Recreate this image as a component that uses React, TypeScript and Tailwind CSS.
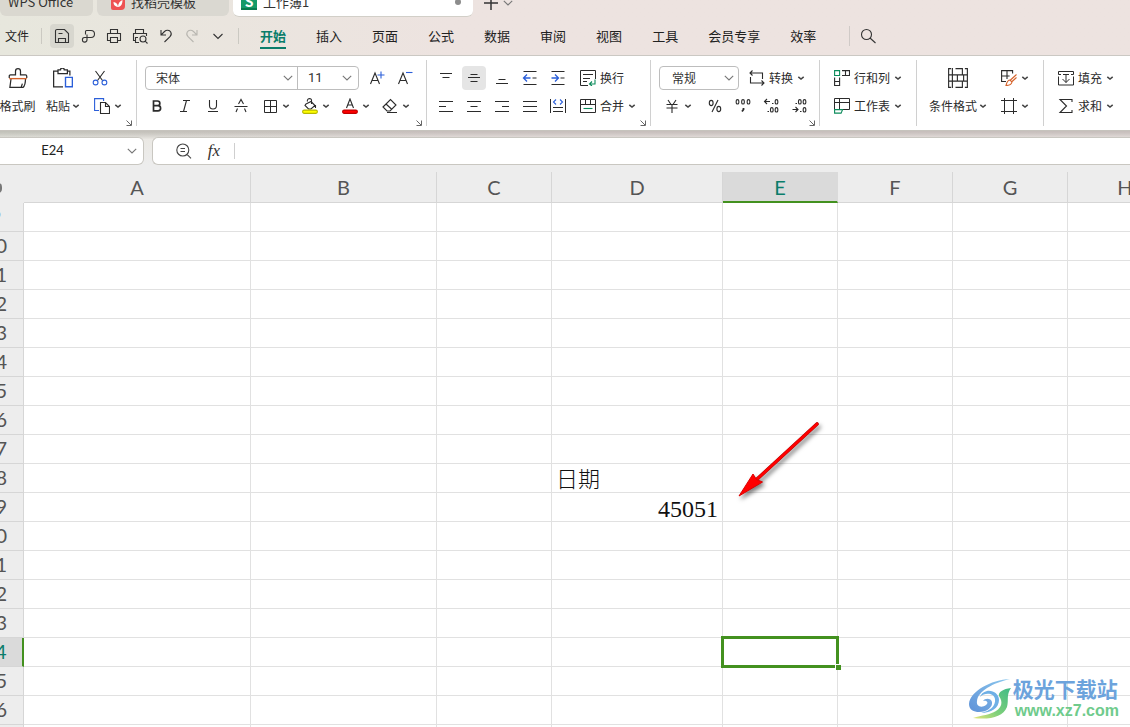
import { useState } from 'react';
import type { ReactNode } from 'react';

type IconProps = { children: ReactNode; className?: string };

function Icon({ children, className = 'size-4' }: IconProps) {
  return (
    <svg
      viewBox="0 0 16 16"
      fill="none"
      stroke="currentColor"
      strokeWidth="1.1"
      className={`${className} shrink-0`}
      aria-hidden="true"
    >
      {children}
    </svg>
  );
}

function Caret() {
  return (
    <svg viewBox="0 0 8 8" className="size-2 shrink-0" fill="none" stroke="#444" strokeWidth="1.5" aria-hidden="true">
      <path d="M1.3 2.8 4 5l2.7-2.2" />
    </svg>
  );
}

function WideCaret({ className = '' }: { className?: string }) {
  return (
    <svg viewBox="0 0 10 6" className={`h-1.5 w-2.5 shrink-0 ${className}`} fill="none" stroke="#777" strokeWidth="1.1" aria-hidden="true">
      <path d="M.8.8 5 5 9.2.8" />
    </svg>
  );
}

function Launcher() {
  return (
    <button aria-label="更多设置" className="absolute right-1 bottom-0 size-1.5 text-[#666]">
      <svg viewBox="0 0 6 6" className="size-1.5" fill="none" stroke="currentColor" aria-hidden="true">
        <path d="M.5.5 5 5M5.5.5v5h-5" />
      </svg>
    </button>
  );
}

type GroupProps = { children: ReactNode; className: string; launcher?: boolean };

function Group({ children, className, launcher }: GroupProps) {
  return (
    <section className={`relative my-1 flex h-[66px] shrink-0 border-r border-[#d0d0d0] pt-1.5 ${className}`}>
      {children}
      {launcher && <Launcher />}
    </section>
  );
}

type ToolProps = { label: string; children: ReactNode; active?: boolean };

function Tool({ label, children, active }: ToolProps) {
  return (
    <button
      aria-label={label}
      className={`flex size-6 shrink-0 items-center justify-center rounded ${active ? 'bg-[#e5e5e5]' : ''}`}
    >
      {children}
    </button>
  );
}

function DropTool({ label, children }: { label: string; children: ReactNode }) {
  return (
    <button aria-label={label} className="flex h-6 w-9 shrink-0 items-center gap-1 pl-[5px]">
      {children}
      <Caret />
    </button>
  );
}

function TextTool({ text, children, caret }: { text: string; children: ReactNode; caret?: boolean }) {
  return (
    <button className="flex h-6 shrink-0 items-center gap-1 whitespace-nowrap">
      {children}
      <span>{text}</span>
      {caret && <Caret />}
    </button>
  );
}

function Lines({ d }: { d: string }) {
  return (
    <Icon>
      <path d={d} strokeWidth="1" />
    </Icon>
  );
}

// A small zero for the number format icons
function Zero({ x, y }: { x: number; y: number }) {
  return <rect x={x} y={y} width="2.6" height="4.4" rx="1.3" strokeWidth="1.1" />;
}

const QUICK_ACTIONS: { label: string; icon: ReactNode; active?: boolean; faded?: boolean }[] = [
  {
    label: '保存',
    active: true,
    icon: <path d="M3 1.5h7.500l4 4v9h-13V3A1.5 1.5 0 0 1 3 1.5ZM4.5 14.500v-4h7v4M4.5 5.5h4" />,
  },
  {
    label: '输出为PDF',
    icon: <path d="M5.500 6.500v-3a1 1 0 0 1 1-1H11a3.500 3.500 0 0 1 0 7H4.500A2.300 2.300 0 1 0 7 11.800V6.500" />,
  },
  { label: '打印', icon: <path d="M4.500 5.500v-4h7v4M4.500 12.500h-3v-7h13v7h-3M4.500 9.500h7v5h-7z" /> },
  {
    label: '打印预览',
    icon: <path d="M3.500 5.500v-4h8v4M3.500 12.500h-2v-7h13V8M6 9.500H3.500v5h3.500M13.200 13.200l2.300 2.300M14 11a3 3 0 1 1-6 0 3 3 0 0 1 6 0Z" />,
  },
  { label: '撤销', icon: <path d="M3 2v5h5M3.200 6.800 6.500 3.500c2-1.800 5-1.500 6.200.5 1 1.700.6 3.300-.7 4.600L6.500 14" /> },
  {
    label: '恢复',
    faded: true,
    icon: <path d="M13 2v5H8M12.800 6.800 9.500 3.500C7.500 1.700 4.500 2 3.300 4c-1 1.700-.6 3.300.7 4.600L9.500 14" />,
  },
  { label: '自定义快速访问工具栏', icon: <path d="m3.500 6 4.500 4.500L12.500 6" /> },
];

const MENUS = ['开始', '插入', '页面', '公式', '数据', '审阅', '视图', '工具', '会员专享', '效率'];

const COLUMNS = ['A', 'B', 'C', 'D', 'E', 'F', 'G', 'H'];
const ROWS = Array.from({ length: 19 }, (_, i) => i + 9);
const CELLS: Record<string, string> = { D18: '日期', D19: '45051' };

function TitleTabs() {
  return (
    <header className="flex h-[17px] shrink-0 items-end gap-1 overflow-hidden text-[13px] text-[#333]">
      <div className="mb-px flex h-7 w-[93px] items-center rounded-b-md bg-[#dad8d0] pl-2">WPS Office</div>
      <div className="mb-px flex h-7 w-[132px] items-center gap-1.5 rounded-b-md bg-[#dad8d1] pl-3.5">
        <svg viewBox="0 0 14 16" className="h-4 w-3.5 shrink-0" aria-hidden="true">
          <path d="M0 2a2 2 0 0 1 2-2h12v12a4 4 0 0 1-4 4H2a2 2 0 0 1-2-2Z" fill="#ee5253" />
          <path d="M7 13.500V7M7 13C3.500 12.500 2.500 10.500 2.500 8 5 8.500 7 10 7 13Zm0 0c3.500-.5 4.500-3.500 4.500-7C9 7 7 9.500 7 13Z" fill="#fff" />
        </svg>
        <span>找稻壳模板</span>
      </div>
      <div className="flex h-[29px] w-60 items-center gap-1.5 rounded-b-md border-b border-[#d2cfc8] bg-white pr-3 pl-2">
        <span className="flex size-4 shrink-0 items-center justify-center border-b-2 border-[#087a4e] bg-[#149a68] text-[14px]/[14px] font-bold text-white">
          S
        </span>
        <span className="grow">工作簿1</span>
        <span className="size-1.5 rounded-full bg-[#8c8c8c]" />
      </div>
      <button aria-label="新建标签" className="ml-1.5 flex h-7 items-center">
        <Icon>
          <path d="M8 1v14M1 8h14" strokeWidth="1.5" />
        </Icon>
      </button>
      <button aria-label="标签列表" className="flex h-7 items-center">
        <WideCaret />
      </button>
    </header>
  );
}

function MenuBar() {
  const [current, setCurrent] = useState('开始');

  return (
    <nav className="flex h-[38px] shrink-0 items-center overflow-hidden text-[13px]/[20px] whitespace-nowrap text-[#222]">
      <button className="ml-[5px] text-[12px]">文件</button>
      <span className="mr-2 ml-3 h-4 w-px shrink-0 bg-[#cbc9c2]" />
      <div className="flex gap-0.5">
        {QUICK_ACTIONS.map((action) => (
          <button
            key={action.label}
            aria-label={action.label}
            className={`flex size-6 shrink-0 items-center justify-center rounded ${action.active ? 'bg-[#d8d7cf]' : ''} ${action.faded ? 'text-[#b8b6b0]' : 'text-[#333]'}`}
          >
            <Icon>{action.icon}</Icon>
          </button>
        ))}
      </div>
      <span className="mr-[21px] ml-2 h-4 w-px shrink-0 bg-[#cbc9c2]" />
      <div className="flex gap-[30px]">
        {MENUS.map((menu) => (
          <button
            key={menu}
            onClick={() => setCurrent(menu)}
            className={`border-y-2 border-t-transparent py-px ${menu === current ? 'border-b-[#0a7d6a] font-bold text-[#0a7d6a]' : 'border-b-transparent'}`}
          >
            {menu}
          </button>
        ))}
      </div>
      <span className="mr-2.5 ml-[33px] h-5 w-px shrink-0 bg-[#d0cac7]" />
      <button aria-label="搜索" className="text-[#333]">
        <Icon>
          <path d="M11.500 6.500a5 5 0 1 1-10 0 5 5 0 0 1 10 0ZM10 10l5.500 5" />
        </Icon>
      </button>
    </nav>
  );
}

function Ribbon() {
  return (
    <div className="flex h-[76px] shrink-0 overflow-hidden border-y border-t-[#cbc8c3] border-b-[#c6c3bd] bg-white text-[12px]/[16px] text-[#2b2b2b]">
      <Group className="w-[137px] gap-2.5" launcher>
        <button className="flex w-[35px] flex-col items-center gap-1">
          <span className="flex h-6 items-center">
            <Icon className="size-5">
              <path d="M1 8V6.500a1 1 0 0 1 1-1h4V2.500a2 2 0 0 1 4 0v3h4a1 1 0 0 1 1 1V8M2.500 8l-1 7.500h10.500c1.500-1 2-4 2-7.500M10.500 15.500l1-3" strokeWidth="1" />
              <path d="M1 8.500h14" stroke="#d5622a" />
            </Icon>
          </span>
          <span className="flex h-6 items-center whitespace-nowrap">格式刷</span>
        </button>
        <button className="flex w-9 flex-col items-center gap-1">
          <span className="flex h-6 items-center">
            <Icon className="size-5">
              <path d="M3.500 2.500H.500v12.500H8M11.500 2.500h2V6M4 1.500h2a1.500 1.500 0 0 1 3 0h2.500v3H4z" strokeWidth="1" />
              <path d="M10 7.500h5.500v7.500H10z" stroke="#2b5fd9" />
            </Icon>
          </span>
          <span className="flex h-6 items-center gap-0.5 whitespace-nowrap">
            粘贴
            <Caret />
          </span>
        </button>
        <div className="flex flex-col gap-1 pl-px">
          <button aria-label="剪切" className="flex h-6 items-center">
            <Icon>
              <path d="m3.500 1 7 9.500M12.500 1l-7 9.500" />
              <path d="M6 12.500a2.400 2.400 0 1 1-4.800 0 2.400 2.400 0 0 1 4.800 0ZM14.800 12.500a2.400 2.400 0 1 1-4.800 0 2.400 2.400 0 0 1 4.800 0Z" stroke="#2b5fd9" />
            </Icon>
          </button>
          <button aria-label="复制" className="flex h-6 items-center gap-1 pl-0.5">
            <Icon>
              <path d="M5 12.500H.600V.600h9V3" stroke="#2b5fd9" />
              <path d="M6.500 4.500h5l4 4v7h-9zM11.500 4.500v4h4" />
            </Icon>
            <Caret />
          </button>
        </div>
      </Group>

      <Group className="w-[290px] flex-col gap-1 pl-2" launcher>
        <div className="flex gap-1">
          <div className="mr-0.5 flex h-6 w-[214px] rounded border border-[#bdbdbd] text-[#333]">
            <div className="grid w-[152px] items-center border-r border-[#bdbdbd]">
              <select aria-label="字体" className="col-start-1 row-start-1 h-5 appearance-none pl-2.5 outline-none">
                <option>宋体</option>
              </select>
              <WideCaret className="pointer-events-none col-start-1 row-start-1 mr-1 justify-self-end" />
            </div>
            <div className="grid grow items-center">
              <select aria-label="字号" className="col-start-1 row-start-1 h-5 appearance-none pl-2.5 text-[13px] outline-none [font-family:Roboto,sans-serif]">
                <option>11</option>
              </select>
              <WideCaret className="pointer-events-none col-start-1 row-start-1 mr-1.5 justify-self-end" />
            </div>
          </div>
          <Tool label="增大字号">
            <Icon>
              <path d="M1.500 14 6 3l4.500 11M3 10.500h6" />
              <path d="M12 1.500v7M8.500 5h7" stroke="#2b5fd9" />
            </Icon>
          </Tool>
          <Tool label="减小字号">
            <Icon>
              <path d="M1.500 14 6 3l4.500 11M3 10.500h6" />
              <path d="M9 2.500h6.500" stroke="#2b5fd9" />
            </Icon>
          </Tool>
        </div>
        <div className="flex gap-1">
          <Tool label="加粗">
            <Icon>
              <path d="M4.500 3h4a2.300 2.300 0 0 1 0 4.700h-4zM4.500 7.700H9a2.600 2.600 0 0 1 0 5.200H4.500z" strokeWidth="1.700" />
            </Icon>
          </Tool>
          <Tool label="倾斜">
            <Icon>
              <path d="M6 2.500h7M3 13.500h7M9.500 2.500l-3 11" />
            </Icon>
          </Tool>
          <Tool label="下划线">
            <Icon>
              <path d="M4.500 2v5.500a3.500 3.500 0 0 0 7 0V2M3 13.500h10" />
            </Icon>
          </Tool>
          <Tool label="删除线">
            <Icon>
              <path d="M1.500 8.500h13M5.500 6 8 1.500 10.500 6M4.500 10.500 3 14M11.500 10.500 13 14" />
            </Icon>
          </Tool>
          <DropTool label="边框">
            <Lines d="M2.500 2.500h12v12h-12zM8.500 2.500v12M2.500 8.500h12" />
          </DropTool>
          <DropTool label="填充颜色">
            <Icon>
              <path d="M5.500 3.500a2 2 0 0 1 4-1.500v4M4 6l5-2.500 4 4-4 3.500H6.500L3 7.500zM13.500 7v3" />
              <rect x=".6" y="12.100" width="14.800" height="3.300" rx="1.600" fill="#ffff00" stroke="#b8b800" />
            </Icon>
          </DropTool>
          <DropTool label="字体颜色">
            <Icon>
              <path d="m4.500 10 3.500-9 3.500 9M5.500 7h5" />
              <rect x=".6" y="12.100" width="14.800" height="3.300" rx="1.600" fill="#ff0000" stroke="#c00000" />
            </Icon>
          </DropTool>
          <DropTool label="清除">
            <Icon>
              <path d="M1 9 8.500 1.500 14 7l-6 6H5zM4 6l6 5.500M5 14.500h10" />
            </Icon>
          </DropTool>
        </div>
      </Group>

      <Group className="w-56 flex-col gap-1 pl-[7px]" launcher>
        <div className="flex gap-1">
          <Tool label="顶端对齐">
            <Lines d="M2 3.500h12M4.500 7.500h7" />
          </Tool>
          <Tool label="垂直居中" active>
            <Lines d="M4.500 4.500h7M2 7.500h12M4.500 11.500h7" />
          </Tool>
          <Tool label="底端对齐">
            <Lines d="M4.500 9.500h7M2 13.500h12" />
          </Tool>
          <Tool label="减少缩进">
            <Icon>
              <path d="M1.500 1.500h13M1.500 14.500h13M10.500 8h4" />
              <path d="M8.500 8h-7M5 4.500 1.500 8 5 11.500" stroke="#2b5fd9" strokeWidth="1.300" />
            </Icon>
          </Tool>
          <Tool label="增加缩进">
            <Icon>
              <path d="M1.500 1.500h13M1.500 14.500h13M10.500 8h4" />
              <path d="M1.500 8h7M5 4.500 8.500 8 5 11.500" stroke="#2b5fd9" strokeWidth="1.300" />
            </Icon>
          </Tool>
          <div className="ml-1.5 flex">
            <TextTool text="换行">
              <Icon>
                <path d="M8 15.500H.500V.500h15V9M3 4.500h10M3 8.500h7M3 11.500h4" strokeWidth="1" />
                <path d="M15 9.500v4.500H9.500M12 11.500 9.500 14l2.500 2" stroke="#0a8a5a" />
              </Icon>
            </TextTool>
          </div>
        </div>
        <div className="flex gap-1">
          <Tool label="左对齐">
            <Lines d="M1 3.500h14M1 8.500h7M1 13.500h14" />
          </Tool>
          <Tool label="水平居中">
            <Lines d="M1 3.500h14M4.500 8.500h7M1 13.500h14" />
          </Tool>
          <Tool label="右对齐">
            <Lines d="M1 3.500h14M8 8.500h7M1 13.500h14" />
          </Tool>
          <Tool label="两端对齐">
            <Lines d="M1 3.500h14M1 8.500h14M1 13.500h14" />
          </Tool>
          <Tool label="分散对齐">
            <Icon>
              <path d="M.500 1v14M15.500 1v14M3 9.500h10M3 13.500h10" strokeWidth="1" />
              <path d="M6 1.500 3.500 4 6 6.500M10 1.500 12.500 4 10 6.500" stroke="#2b5fd9" />
            </Icon>
          </Tool>
          <div className="ml-1.5 flex">
            <TextTool text="合并" caret>
              <Icon>
                <path d="M.500 1.500h15v13H.500zM.500 6.500h15M5.500 1.500v5M10.500 1.500v5" strokeWidth="1" />
                <path d="M3.500 10.500h9" stroke="#0a8a5a" />
              </Icon>
            </TextTool>
          </div>
        </div>
      </Group>

      <Group className="w-[169px] flex-col gap-1 pl-2" launcher>
        <div className="flex gap-2.5">
          <div className="grid h-6 w-20 items-center rounded border border-[#bdbdbd] text-[#333]">
            <select aria-label="数字格式" className="col-start-1 row-start-1 h-5 appearance-none pl-3 outline-none">
              <option>常规</option>
            </select>
            <WideCaret className="pointer-events-none col-start-1 row-start-1 mr-1 justify-self-end" />
          </div>
          <TextTool text="转换" caret>
            <Icon>
              <path d="M3.500.500 1 3l2.500 2.500M1 3h12.500v6M1.500 7v6H15M12.500 10.500 15 13l-2.500 2.500" />
            </Icon>
          </TextTool>
        </div>
        <div className="flex gap-1">
          <DropTool label="货币格式">
            <Icon>
              <path d="m4 2 3 4.500M12 2 9 6.500M2.500 6.500h11M2.500 10h11M8 6.500V15" />
            </Icon>
          </DropTool>
          <div className="ml-1 flex gap-1">
            <Tool label="百分比样式">
              <Icon>
                <path d="M11 2 5 14" />
                <ellipse cx="4.200" cy="5" rx="1.900" ry="2.600" />
                <ellipse cx="11.800" cy="11" rx="1.900" ry="2.600" />
              </Icon>
            </Tool>
            <Tool label="千位分隔样式">
              <Icon>
                <Zero x={1.200} y={1.600} />
                <Zero x={6.700} y={1.600} />
                <Zero x={12.200} y={1.600} />
                <path d="M8.500 10v1.500L7 13.500" strokeWidth="1.800" />
              </Icon>
            </Tool>
            <Tool label="增加小数位数">
              <Icon>
                <path d="M4 1 1.500 3.500 4 6M1.500 3.500H7M9 5.500h1.500M4.500 13.500H6" />
                <Zero x={12.200} y={1.600} />
                <Zero x={7.500} y={9.600} />
                <Zero x={12.200} y={9.600} />
              </Icon>
            </Tool>
            <Tool label="减少小数位数">
              <Icon>
                <path d="M4.500 5.500H6M1.500 11.500H7M4.500 9 7 11.500 4.500 14M9 13.500h1.500" />
                <Zero x={7.500} y={1.600} />
                <Zero x={12.200} y={1.600} />
                <Zero x={12.200} y={9.600} />
              </Icon>
            </Tool>
          </div>
        </div>
      </Group>

      <Group className="w-[97px] flex-col gap-1 pl-3.5">
        <TextTool text="行和列" caret>
          <Icon>
            <path d="M.600 7.500v8h5v-8M.600 11.500h5M8 .600h7.500v4.900H8M11.500.600v4.900" />
            <path d="M.600.600h5v4.900h-5z" stroke="#0a8a5a" />
          </Icon>
        </TextTool>
        <TextTool text="工作表" caret>
          <Icon>
            <path d="M.500 11V.500h15v11H9M.500 4.500h15M5.500.500V11" strokeWidth="1" />
            <path d="M.600 11.600h8l-1.500 3.500H.600z" stroke="#0a8a5a" />
          </Icon>
        </TextTool>
      </Group>

      <Group className="w-[127px] gap-3.5 pl-3">
        <button className="flex flex-col items-center gap-1">
          <span className="flex h-6 items-center">
            <Icon className="size-5">
              <path d="M2.500.500H.500v15h2M13.500.500h2v15h-2M.500 5.500h3M.500 10.500h3M3.500 0v16M3.500 5.500h9v5h-9M6 .500h5.500v5M6 15.500h5.500v-5M12.500 5.500h3M12.500 10.500h3M7.500 5.500v5" strokeWidth=".9" />
            </Icon>
          </span>
          <span className="flex h-6 items-center gap-0.5 whitespace-nowrap">
            条件格式
            <Caret />
          </span>
        </button>
        <div className="flex flex-col gap-1">
          <button aria-label="单元格样式" className="flex h-6 items-center gap-1">
            <Icon>
              <path d="M5 11.500H.600V.600h11v3M.600 6h8M6 .600V9" />
              <path d="M15.500 4.500 9.500 10M15.500 7.500l-5 4.500M9 10c-2 0-3 1.500-4 5.500 3 0 5.500-.5 6-3.500z" stroke="#d5622a" />
            </Icon>
            <Caret />
          </button>
          <button aria-label="单元格" className="flex h-6 items-center gap-1">
            <Lines d="M3.500 0v16M12.500 0v16M0 2.500h16M0 13.500h16" />
            <Caret />
          </button>
        </div>
      </Group>

      <Group className="grow gap-3.5 border-r-0 pl-3.5">
        <div className="flex flex-col gap-1">
          <TextTool text="填充" caret>
            <Icon>
              <path d="M.500 4.500v-3h15v3M.500 4.500H3M13 4.500h2.500M.500 6.500v8.500h15V6.500M5 4.500h6M8 4.500v8M4.500 9 8 12.500 11.500 9" strokeWidth="1" />
            </Icon>
          </TextTool>
          <TextTool text="求和" caret>
            <Icon>
              <path d="M14 4V1.500H2L8.500 8 2 14.500h12V12" />
            </Icon>
          </TextTool>
        </div>
        <div className="flex flex-col gap-1">
          <Tool label="排序">
            <Icon className="size-5">
              <path d="M0 12.500 4 4l4 8.500M1.500 10h5" />
            </Icon>
          </Tool>
          <Tool label="筛选">
            <Icon className="size-5">
              <path d="M0 2.500h12L8 8v6l-3-2V8z" />
            </Icon>
          </Tool>
        </div>
      </Group>
    </div>
  );
}

function FormulaBar() {
  return (
    <div className="flex h-[34px] shrink-0 items-end gap-2 overflow-hidden bg-linear-to-b from-black/15 via-[#ededed]/40 via-25% to-[#ededed]">
      <div className="flex h-7 w-36 shrink-0 items-center rounded-r-md border border-l-0 border-[#c9c7c1] bg-white pr-1.5">
        <input
          aria-label="名称框"
          defaultValue="E24"
          className="w-[105px] text-center text-[13px] text-[#222] outline-none [font-family:Lato,sans-serif]"
        />
        <WideCaret className="ml-auto" />
      </div>
      <div className="flex h-7 grow items-center rounded-l-md border border-r-0 border-[#c9c7c1] bg-white pl-[23px] text-[#444]">
        <button aria-label="浏览公式结果">
          <Icon>
            <path d="M12.800 7a6 6 0 1 1-12 0 6 6 0 0 1 12 0ZM11 11.300l4 4M4.500 5.500h4.500M4.500 8.500h4.500" />
          </Icon>
        </button>
        <button
          aria-label="插入函数"
          className="ml-3.5 w-4 text-[17px]/[20px] text-[#333] italic [font-family:'Liberation_Serif',serif]"
        >
          fx
        </button>
        <span className="ml-3 h-4 w-px bg-[#cfcfcf]" />
        <input aria-label="编辑栏" className="min-w-0 grow px-2 text-[13px] outline-none" />
      </div>
    </div>
  );
}

function Sheet() {
  const [selected, setSelected] = useState({ col: 'E', row: 24 });

  return (
    <main className="relative min-h-0 grow overflow-hidden bg-[#ededed] pt-[7px]">
      {/* The row header starts left of the window edge */}
      <div className="-ml-8">
        <table className="w-[1215px] min-w-full table-fixed border-separate border-spacing-0 text-[20px]/[24px] text-[#555]">
          <colgroup>
            <col className="w-14" />
            <col className="w-[227px]" />
            <col className="w-[186px]" />
            <col className="w-[115px]" />
            <col className="w-[171px]" />
            <col className="w-[115px]" />
            <col className="w-[115px]" />
            <col className="w-[115px]" />
            <col />
          </colgroup>
          <thead className="[font-family:Lato,sans-serif]">
            <tr className="h-[31px]">
              <th className="p-0">
                <span className="mx-auto block h-2.5 w-3 rounded-sm bg-[#777]" />
              </th>
              {COLUMNS.map((col) => (
                <th
                  key={col}
                  scope="col"
                  className={`border-r p-0 font-normal ${col === selected.col ? 'border-b-2 border-r-[#dadada] border-b-[#43911f] bg-[#dadada] text-[#0a7d6a]' : 'border-b border-[#d6d6d6]'}`}
                >
                  {col}
                </th>
              ))}
            </tr>
          </thead>
          <tbody>
            {ROWS.map((row) => (
              <tr key={row} className="h-[29px]">
                <th
                  scope="row"
                  className={`border-b border-b-[#d6d6d6] p-0 pb-[3px] font-normal [font-family:Lato,sans-serif] ${row === selected.row ? 'border-r-2 border-r-[#43911f] bg-[#dadada] text-[#0a7d6a]' : 'border-r border-r-[#d6d6d6]'}`}
                >
                  {row}
                </th>
                {COLUMNS.map((col) => {
                  const value = CELLS[`${col}${row}`] ?? '';
                  const isNumber = value !== '' && !Number.isNaN(Number(value));
                  const isSelected = col === selected.col && row === selected.row;
                  return (
                    <td
                      key={col}
                      onClick={() => setSelected({ col, row })}
                      className={`relative border-r border-b border-[#e1e1e1] bg-white px-1 pt-1 pb-0 text-[#111] [font-family:'Liberation_Serif','Noto_Sans_CJK_SC',serif] ${isNumber ? 'text-right text-[24px]/[24px]' : 'text-[22px]/[24px] font-light'}`}
                    >
                      {value}
                      {isSelected && (
                        <>
                          <span className="absolute -inset-0.5 z-10 border-3 border-[#43911f]" />
                          <span className="absolute -right-1 -bottom-1 z-10 size-1.5 border-t border-l border-white bg-[#43911f]" />
                        </>
                      )}
                    </td>
                  );
                })}
              </tr>
            ))}
          </tbody>
        </table>
      </div>

      <svg viewBox="0 0 90 84" className="absolute top-[253px] left-[734px] z-20 h-[84px] w-[90px] drop-shadow-[2px_3px_2px_rgba(0,0,0,0.5)]" aria-hidden="true">
        <path d="M83 6 21 63" stroke="#a00" strokeWidth="3.600" strokeLinecap="round" />
        <path d="M83 6 21 63" stroke="#f00" strokeWidth="2.600" strokeLinecap="round" />
        <path d="m5 78 14-22 3.500 5.500 6 2.500z" fill="#f00" stroke="#d00" strokeWidth="1" />
      </svg>

      <Watermark />
    </main>
  );
}

function Watermark() {
  return (
    <div className="absolute right-[11px] bottom-[7px] z-20 flex items-center">
      <svg viewBox="0 0 44 42" className="h-[42px] w-11" aria-hidden="true">
        <defs>
          <linearGradient id="wave-blue" x1="1" y1="0" x2="0" y2="1">
            <stop offset="0" stopColor="#8cc8ee" />
            <stop offset="1" stopColor="#5f92d8" />
          </linearGradient>
          <linearGradient id="wave-green" x1="1" y1="0" x2="0" y2="1">
            <stop offset="0" stopColor="#3fba86" />
            <stop offset=".6" stopColor="#7fd07a" />
            <stop offset="1" stopColor="#e6e67a" />
          </linearGradient>
        </defs>
        <path
          d="M41 1C22 2 1 13 0 26c0 6 5 8 10 8 8 0 14-5 13-10-1-4-7-4-9-1 4-1 6 2 3 4-4 3-10 2-9-4C9 13 24 5 41 1Z"
          fill="url(#wave-blue)"
        />
        <path d="M11 19c5-5 14-4 15 2 1 7-5 12-14 14 10 0 18-5 18-13 0-6-6-10-12-9-4 1-6 3-7 6Z" fill="#6fb0e6" />
        <path d="M42 10c-8 1-13 4-12 8 4 6 3 11-3 15-6 4-14 4-23 7 17 2 30-1 34-11 2-7-1-12 4-19Z" fill="url(#wave-green)" />
      </svg>
      <div className="[font-family:'Liberation_Sans','Noto_Sans_CJK_SC',sans-serif]">
        <p className="text-[21px]/[24px] font-bold text-[#6ca3dc]">极光下载站</p>
        <p className="pl-0.5 text-[16px]/[18px] font-bold text-[#6fcb8c]">www.xz7.com</p>
      </div>
    </div>
  );
}

export default function App() {
  return (
    <div className="flex h-screen min-h-0 flex-col overflow-hidden bg-linear-to-r from-[#e7e7dd] to-[#ede3e0] to-40% [font-family:'Noto_Sans_CJK_SC',sans-serif]">
      <TitleTabs />
      <MenuBar />
      <Ribbon />
      <FormulaBar />
      <Sheet />
    </div>
  );
}
